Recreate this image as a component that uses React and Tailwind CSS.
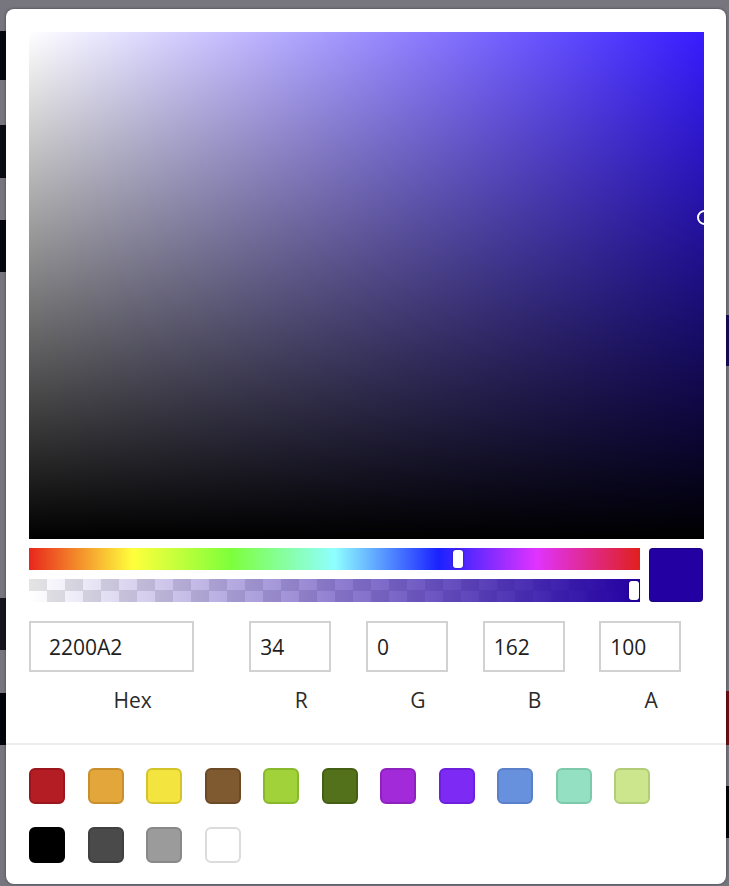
import React from "react";

const swatches = [
  { c: "bg-[#b31d23]", b: "border-[#9c171d]" },
  { c: "bg-[#e3a63a]", b: "border-[#c98f2c]" },
  { c: "bg-[#f3e43f]", b: "border-[#d3c42c]" },
  { c: "bg-[#7f5930]", b: "border-[#6c4a26]" },
  { c: "bg-[#a1d23a]", b: "border-[#88b82c]" },
  { c: "bg-[#52711a]", b: "border-[#445e14]" },
  { c: "bg-[#a22ad8]", b: "border-[#8d22bf]" },
  { c: "bg-[#7e2af5]", b: "border-[#6c20db]" },
  { c: "bg-[#6791dd]", b: "border-[#5a80c9]" },
  { c: "bg-[#93e1c2]", b: "border-[#7fc9ab]" },
  { c: "bg-[#cbe68c]", b: "border-[#b2cc77]" },
  { c: "bg-[#000000]", b: "border-[#000000]" },
  { c: "bg-[#4a4a4a]", b: "border-[#404040]" },
  { c: "bg-[#9b9b9b]", b: "border-[#888888]" },
  { c: "bg-[#ffffff]", b: "border-[#dcdcdc]" },
];

function Field({ value, label, wide }) {
  return (
    <div className={wide ? "flex flex-[2] flex-col" : "flex flex-1 flex-col"}>
      <input
        readOnly
        value={value}
        className={
          "h-[51px] border-2 border-[#d2d2d2] bg-white text-[21px] text-[#1e1e1e] outline-none " +
          (wide ? "w-[165px] pl-[18px]" : "w-[82px] pl-[9px]")
        }
      />
      <div className="mt-[14px] w-full text-center text-[21px] leading-[29px] text-[#2a2a2a]">
        {label}
      </div>
    </div>
  );
}

export default function App() {
  return (
    <div
      className="relative h-[886px] w-[729px] overflow-hidden bg-[#77767f]"
      style={{ fontFamily: '"Open Sans", "Noto Sans", sans-serif' }}
    >
      {/* backdrop page under the overlay */}
      <div className="flex h-full w-full justify-between">
        <div className="flex w-[6px] flex-col">
          <div className="h-[31px]" />
          <div className="h-[49px] bg-[#06060e]" />
          <div className="h-[45px]" />
          <div className="h-[53px] bg-[#0b0b14]" />
          <div className="h-[42px]" />
          <div className="h-[52px] bg-[#06060e]" />
          <div className="h-[326px]" />
          <div className="h-[52px] bg-[#16151d]" />
          <div className="h-[43px]" />
          <div className="h-[52px] bg-[#03030a]" />
        </div>
        <div className="flex w-[3px] flex-col">
          <div className="h-[315px]" />
          <div className="h-[51px] bg-[#170c55]" />
          <div className="h-[325px]" />
          <div className="h-[54px] bg-[#6a1016]" />
          <div className="h-[41px]" />
          <div className="h-[52px] bg-[#030308]" />
        </div>
      </div>

      {/* color picker popup */}
      <div className="absolute left-[6px] top-[9px] flex h-[875px] w-[720px] flex-col rounded-[8px] bg-white shadow-[0_0_3px_rgba(0,0,0,0.45)]">
        <div className="flex flex-col px-[23px] pt-[23px] pb-[28px]">
          {/* saturation area */}
          <div className="relative h-[507px] w-[675px] overflow-hidden bg-[#381cff]">
            <div className="absolute inset-0 bg-[linear-gradient(to_right,#ffffff,rgba(255,255,255,0))]" />
            <div className="absolute inset-0 bg-[linear-gradient(to_top,#000000,rgba(0,0,0,0))]" />
            <div className="absolute left-[668px] top-[178px] h-[15px] w-[15px] rounded-full border-[2.5px] border-white shadow-[0_0_1px_rgba(0,0,0,0.4)]" />
          </div>

          {/* sliders + preview */}
          <div className="mt-[9px] flex gap-[9px]">
            <div className="flex w-[612px] flex-col gap-[9px]">
              <div className="relative h-[22px] bg-[linear-gradient(to_right,#e8261c_0%,#ffff3c_17%,#7dff3a_33%,#8fffff_50%,#1a22ff_67%,#e033ff_83%,#e0201c_100%)]">
                <div className="absolute left-[424px] top-[2px] h-[18px] w-[10px] rounded-[3px] bg-white shadow-[0_0_2px_rgba(0,0,0,0.5)]" />
              </div>
              <div className="relative h-[23px] bg-[repeating-conic-gradient(#fff_0_25%,#e4e4e4_0_50%)] bg-[length:36px_23px]">
                <div className="absolute inset-0 bg-[linear-gradient(to_right,rgba(34,0,162,0),rgba(34,0,162,1))]" />
                <div className="absolute left-[600px] top-[2px] h-[19px] w-[10px] rounded-[3px] bg-white shadow-[0_0_2px_rgba(0,0,0,0.5)]" />
              </div>
            </div>
            <div className="h-[54px] w-[54px] rounded-[4px] bg-[#2200a2] shadow-[inset_0_0_0_1px_rgba(0,0,0,0.2)]" />
          </div>

          {/* inputs */}
          <div className="mt-[19px] flex gap-[13px]">
            <Field value="2200A2" label="Hex" wide />
            <Field value="34" label="R" />
            <Field value="0" label="G" />
            <Field value="162" label="B" />
            <Field value="100" label="A" />
          </div>
        </div>

        {/* preset swatches */}
        <div className="flex flex-wrap gap-x-[22.5px] gap-y-[23px] border-t-2 border-[#eeeeee] px-[23px] pt-[23px]">
          {swatches.map((s, i) => (
            <div key={i} className={`h-[36px] w-[36px] rounded-[6px] border-2 ${s.c} ${s.b}`} />
          ))}
        </div>
      </div>
    </div>
  );
}
